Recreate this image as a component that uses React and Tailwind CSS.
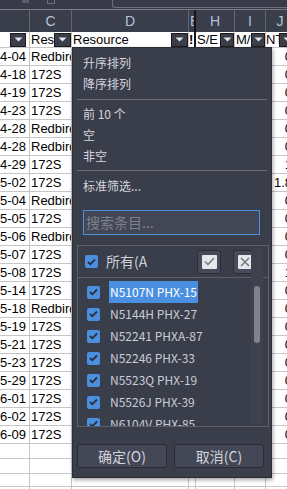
const rows = [
  ['2024-04-04', 'Redbird', '0'],
  ['2024-04-18', '172S', '0'],
  ['2024-04-19', '172S', '0'],
  ['2024-04-23', '172S', '0'],
  ['2024-04-28', 'Redbird', '0'],
  ['2024-04-28', 'Redbird', '0'],
  ['2024-04-29', '172S', '1'],
  ['2024-05-02', '172S', '1.8'],
  ['2024-05-04', 'Redbird', '0'],
  ['2024-05-05', '172S', '0'],
  ['2024-05-06', 'Redbird', '0'],
  ['2024-05-07', '172S', '0'],
  ['2024-05-08', '172S', '1'],
  ['2024-05-14', '172S', '0'],
  ['2024-05-18', 'Redbird', '0'],
  ['2024-05-19', '172S', '0'],
  ['2024-05-21', '172S', '0'],
  ['2024-05-23', '172S', '0'],
  ['2024-05-29', '172S', '0'],
  ['2024-06-01', '172S', '0'],
  ['2024-06-02', '172S', '0'],
  ['2024-06-09', '172S', '0'],
]

const items = [
  'N5107N PHX-15',
  'N5144H PHX-27',
  'N52241 PHXA-87',
  'N52246 PHX-33',
  'N5523Q PHX-19',
  'N5526J PHX-39',
  'N6104V PHX-85',
]

function DropBtn({ w = 'w-[17px]' }) {
  return (
    <div className={`flex h-[14px] ${w} shrink-0 items-center justify-center border border-[#1a1a1a] bg-[#3a3d4a]`}>
      <svg width="9" height="5" viewBox="0 0 9 5">
        <path d="M0.5 0.5h8l-4 4z" fill="#e4e6ea" />
      </svg>
    </div>
  )
}

function Check() {
  return (
    <div className="flex h-[13px] w-[13px] shrink-0 items-center justify-center rounded-[2px] bg-[#4a8fe0]">
      <svg width="9" height="8" viewBox="0 0 9 8">
        <path d="M1 4l2.3 2.3L8 1.5" fill="none" stroke="#2b2e3a" strokeWidth="1.8" />
      </svg>
    </div>
  )
}

function Popup() {
  return (
    <div className="absolute left-[72px] top-[47px] flex h-[431px] w-[200px] flex-col border border-[#2a2c34] bg-[#3a3d4a] pt-[4px] font-['Noto_Sans_CJK_SC','Noto_Sans',sans-serif] text-[#d3d7df] shadow-[1px_2px_4px_rgba(0,0,0,0.35)]">
      <div className="h-[21px] pl-[10px] text-[12px] leading-[21px]">升序排列</div>
      <div className="h-[21px] pl-[10px] text-[12px] leading-[21px]">降序排列</div>
      <div className="mx-[4px] mt-[5px] h-px bg-[#6b6e79]" />
      <div className="mt-[3px] h-[21px] pl-[10px] text-[12px] leading-[21px]">前 10 个</div>
      <div className="h-[21px] pl-[10px] text-[12px] leading-[21px]">空</div>
      <div className="h-[21px] pl-[10px] text-[12px] leading-[21px]">非空</div>
      <div className="mx-[4px] mt-[4px] h-px bg-[#6b6e79]" />
      <div className="mt-[4px] h-[21px] pl-[10px] text-[12px] leading-[21px]">标准筛选...</div>

      <div className="ml-[10px] mt-[14px] flex h-[25px] w-[177px] items-center border border-[#4a8fe0] bg-[#434655] pl-[2px] text-[14px] text-[#7d818e]">
        搜索条目...
      </div>

      <div className="relative ml-[4px] mt-[10px] h-[182px] w-[192px] overflow-hidden border border-[#5d606b]">
        <div className="flex h-[32px] items-center border-b border-[#5d606b] pl-[7px] pr-[11px]">
          <Check />
          <div className="ml-[8px] w-[41px] overflow-hidden whitespace-nowrap text-[14px] text-[#cdd1d9]">所有(All)</div>
          <div className="ml-auto flex h-[24px] w-[24px] items-center justify-center rounded-[3px] border border-[#2b2d35] bg-[#474a58]">
            <div className="flex h-[14px] w-[15px] items-center justify-center rounded-[1px] bg-[#e6e7ea]">
              <svg width="11" height="9" viewBox="0 0 11 9">
                <path d="M1 4.5l3 3L10 1" fill="none" stroke="#74767c" strokeWidth="1.5" />
              </svg>
            </div>
          </div>
          <div className="ml-[12px] flex h-[24px] w-[24px] items-center justify-center rounded-[3px] border border-[#2b2d35] bg-[#474a58]">
            <div className="flex h-[14px] w-[15px] items-center justify-center rounded-[1px] bg-[#e6e7ea]">
              <svg width="10" height="10" viewBox="0 0 10 10">
                <path d="M1 1l8 8M9 1l-8 8" fill="none" stroke="#74767c" strokeWidth="1.5" />
              </svg>
            </div>
          </div>
        </div>
        <div className="pt-[3px]">
          {items.map((it, i) => (
            <div key={it} className="flex h-[22px] items-center pl-[9px]">
              <Check />
              <span
                className={`ml-[9px] h-[22px] whitespace-nowrap px-[1px] text-[12px] leading-[22px] ${
                  i === 0 ? 'bg-[#4a8fe0] text-white' : 'text-[#c9cdd6]'
                }`}
              >
                {it}
              </span>
            </div>
          ))}
        </div>
        <div className="absolute right-[5px] top-[2px] h-[176px] w-[12px] bg-[#3e414e]" />
        <div className="absolute right-[8px] top-[40px] h-[57px] w-[6px] rounded-full bg-[#80838e]" />
      </div>

      <div className="ml-[4px] mt-[17px] flex gap-[7px]">
        <div className="flex h-[24px] w-[90px] items-center justify-center rounded-[3px] border border-[#2b2d35] bg-[#444756] text-[14px] text-[#d0d4dc]">
          确定(O)
        </div>
        <div className="flex h-[24px] w-[90px] items-center justify-center rounded-[3px] border border-[#2b2d35] bg-[#444756] text-[14px] text-[#d0d4dc]">
          取消(C)
        </div>
      </div>
    </div>
  )
}

export default function App() {
  return (
    <div className="relative h-[489px] w-[287px] overflow-hidden bg-white font-['Liberation_Sans',Arial,sans-serif]">
      {/* toolbar strip */}
      <div className="relative h-[9px] bg-[#383b47]">
        <div className="absolute left-[22px] top-0 h-[3px] w-[7px] bg-[#5b5e6a]" />
        <div className="absolute left-[47px] top-0 h-[4px] w-[8px] border-x border-b border-[#6d707c]" />
        <div className="absolute left-[112px] top-0 h-[8px] w-[180px] rounded-bl-[3px] border-b border-l border-[#6d707c]" />
      </div>
      <div className="h-px bg-[#777a86]" />

      {/* column letters */}
      <div className="flex h-[22px] bg-[#3a3d4a] text-[14px] text-[#b4c3dc]">
        <div className="w-[30px] shrink-0 border-r border-[#62656f]" />
        <div className="flex w-[42px] shrink-0 items-center justify-center border-r border-[#62656f]">C</div>
        <div className="flex w-[117px] shrink-0 items-center justify-center border-r border-[#62656f]">D</div>
        <div className="flex w-[7px] shrink-0 items-center justify-start overflow-hidden border-r-2 border-[#15161a] pl-[1px]">E</div>
        <div className="flex w-[39px] shrink-0 items-center justify-center border-r border-[#62656f]">H</div>
        <div className="flex w-[31px] shrink-0 items-center justify-center border-r border-[#62656f]">I</div>
        <div className="flex w-[28px] shrink-0 items-center justify-center">J</div>
      </div>

      {/* filter row */}
      <div className="flex h-[16px] border-b border-[#c6c6c6] text-[13px] text-black">
        <div className="flex w-[30px] shrink-0 items-center justify-end border-r border-[#c6c6c6] pr-[3px]">
          <DropBtn w="w-[16px]" />
        </div>
        <div className="flex w-[42px] shrink-0 items-center border-r border-[#c6c6c6]">
          <span className="flex-1 overflow-hidden whitespace-nowrap pl-[1px]">Resource</span>
          <DropBtn />
        </div>
        <div className="flex w-[117px] shrink-0 items-center border-r border-[#c6c6c6]">
          <span className="flex-1 overflow-hidden whitespace-nowrap pl-[1px]">Resource</span>
          <DropBtn />
        </div>
        <div className="flex w-[7px] shrink-0 items-center overflow-hidden border-r-2 border-[#15161a] font-bold">!</div>
        <div className="flex w-[39px] shrink-0 items-center border-r border-[#c6c6c6]">
          <span className="flex-1 overflow-hidden whitespace-nowrap pl-[1px]">S/E</span>
          <DropBtn w="w-[14px]" />
        </div>
        <div className="flex w-[31px] shrink-0 items-center border-r border-[#c6c6c6]">
          <span className="flex-1 overflow-hidden whitespace-nowrap pl-[1px]">M/E</span>
          <DropBtn w="w-[14px]" />
        </div>
        <div className="flex w-[28px] shrink-0 items-center">
          <span className="w-[13px] shrink-0 overflow-hidden whitespace-nowrap">NT</span>
          <DropBtn />
        </div>
      </div>

      {/* data */}
      {rows.map((r, i) => (
        <div key={i} className="flex h-[18px] border-b border-[#c6c6c6] text-[13px] text-black">
          <div className="flex w-[30px] shrink-0 items-center justify-end overflow-hidden whitespace-nowrap border-r border-[#c6c6c6] pr-[3px]">
            <span className="shrink-0">{r[0]}</span>
          </div>
          <div className="flex w-[42px] shrink-0 items-center overflow-hidden whitespace-nowrap border-r border-[#c6c6c6] pl-[1px]">
            {r[1]}
          </div>
          <div className="w-[117px] shrink-0 border-r border-[#c6c6c6]" />
          <div className="w-[7px] shrink-0 border-r border-[#c6c6c6]" />
          <div className="w-[39px] shrink-0 border-r border-[#c6c6c6]" />
          <div className="w-[31px] shrink-0 border-r border-[#c6c6c6]" />
          <div className="flex w-[28px] shrink-0 items-center justify-end pr-[2px]">{r[2]}</div>
        </div>
      ))}

      {[15, 15, 13, 13].map((h, i) => (
        <div key={i} className={`flex border-b border-[#c6c6c6] ${h === 15 ? 'h-[15px]' : 'h-[13px]'}`}>
          <div className="w-[30px] shrink-0 border-r border-[#c6c6c6]" />
          <div className="w-[42px] shrink-0 border-r border-[#c6c6c6]" />
          <div className="w-[117px] shrink-0 border-r border-[#c6c6c6]" />
          <div className="w-[7px] shrink-0 border-r border-[#c6c6c6]" />
          <div className="w-[39px] shrink-0 border-r border-[#c6c6c6]" />
          <div className="w-[31px] shrink-0 border-r border-[#c6c6c6]" />
          <div className="w-[28px] shrink-0" />
        </div>
      ))}

      <Popup />
    </div>
  )
}
